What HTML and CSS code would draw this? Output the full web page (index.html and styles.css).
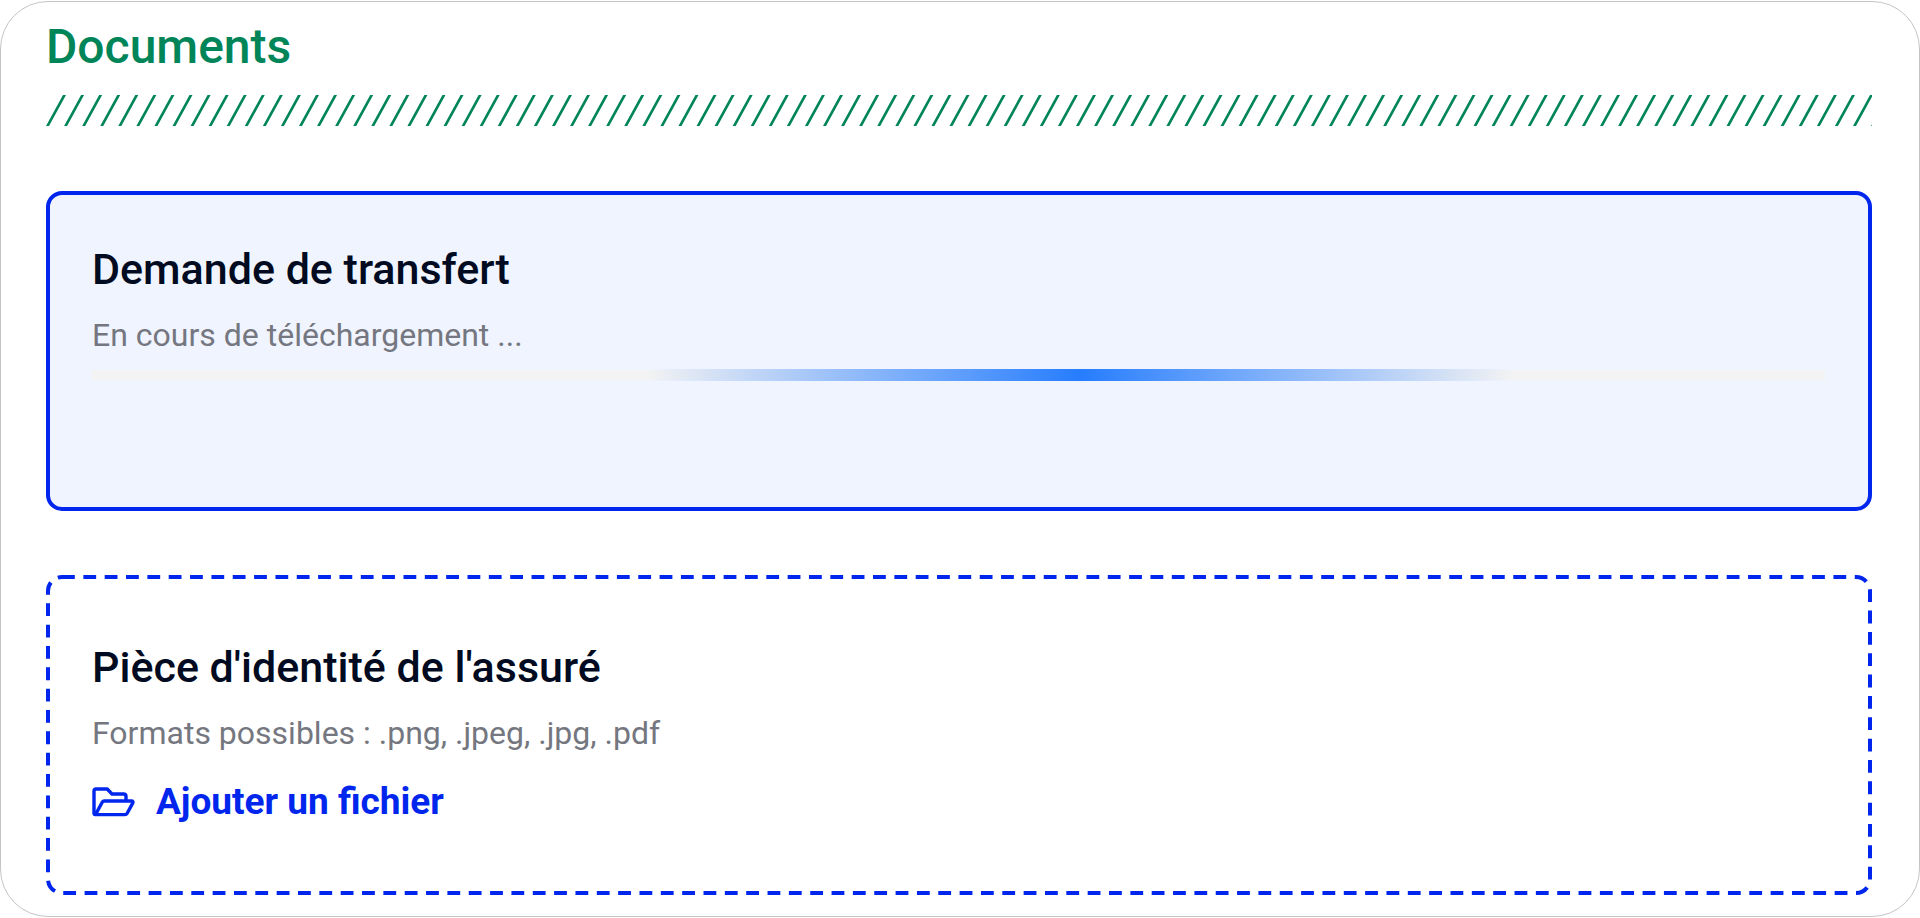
FILE: index.html
```html
<!DOCTYPE html>
<html lang="fr">
<head>
    <meta charset="UTF-8">
    <meta name="viewport" content="width=device-width, initial-scale=1.0">
    <title>Documents</title>
    <link rel="stylesheet" href="styles.css">
</head>
<body>
    <main class="panel">
        <h1 class="title">Documents</h1>
        <svg class="stripes" aria-hidden="true">
            <path d="M0 0H3614" pathLength="18000" transform="translate(8.5 15.5) skewX(-28.74)"/>
        </svg>

        <section class="card card-loading">
            <h2 class="card-title">Demande de transfert</h2>
            <p class="card-text">En cours de téléchargement ...</p>
            <div class="progress" role="progressbar" aria-label="Demande de transfert">
                <div class="progress-bar"></div>
            </div>
        </section>

        <section class="card card-empty">
            <svg class="dashes" aria-hidden="true">
                <rect class="dashes-line" x="2" y="2" rx="14" pathLength="1992"/>
            </svg>
            <h2 class="card-title">Pièce d'identité de l'assuré</h2>
            <p class="card-text">Formats possibles : .png, .jpeg, .jpg, .pdf</p>
            <button type="button" class="add-file">
                <svg class="icon" viewBox="0 0 44 30" aria-hidden="true">
                    <path d="M3.5 27.6Q2 27.6 2 26.1V4Q2 2 4 2H15.2L20 7H31.5Q34 7 34 9.5V14"/>
                    <path d="M3.5 27.6L10.2 15.3Q10.9 14 12.4 14H39.4Q41.8 14 40.7 16.1L35.2 26.2Q34.4 27.6 32.8 27.6Z"/>
                </svg>
                Ajouter un fichier
            </button>
        </section>
    </main>
</body>
</html>
```
FILE: styles.css
```css
* {
    box-sizing: border-box;
    margin: 0;
    padding: 0;
}

body {
    font-family: Roboto, Arial, sans-serif;
    background: #fff;
    color: #000a20;
    padding-top: 1px;
}

.panel {
    border: 1px solid #c4c4c4;
    border-radius: 48px;
    padding: 17px 47px 21px 45px;
}

.title {
    color: #008559;
    font-size: 48px;
    font-weight: 500;
    line-height: 56px;
    margin-bottom: 20px;
}

.stripes {
    display: block;
    width: 100%;
    height: 31px;
    stroke: #008559;
    stroke-width: 31px;
    stroke-dasharray: 15 75;
    margin-bottom: 65px;
}

.card {
    position: relative;
    min-height: 320px;
    border-radius: 16px;
    padding: 0 46px;
}

.card-loading {
    background: #f0f4ff;
    border: 4px solid #0026ee;
    padding: 50px 43px 50px 42px;
    margin-bottom: 64px;
}

.card-empty {
    padding-top: 68px;
}

/* dashed outline of the empty card */
.dashes {
    position: absolute;
    top: 0;
    left: 0;
    width: 100%;
    height: 100%;
    pointer-events: none;
}

.dashes-line {
    width: calc(100% - 4px);
    height: calc(100% - 4px);
    fill: none;
    stroke: #0026ee;
    stroke-width: 4px;
    stroke-dasharray: 6 4;
}

.card-title {
    font-size: 43px;
    font-weight: 500;
    line-height: 48px;
    margin-bottom: 22px;
}

.card-text {
    color: #757780;
    font-size: 32px;
    line-height: 40px;
}

.progress {
    position: relative;
    height: 10px;
    margin-top: 15px;
    background: #f3f3f3;
}

.progress-bar {
    position: absolute;
    top: -1px;
    left: 32%;
    width: 50%;
    height: 12px;
    background: linear-gradient(90deg, transparent, #267dff, transparent);
}

.add-file {
    display: flex;
    align-items: center;
    gap: 20px;
    margin-top: 29px;
    border: none;
    background: none;
    color: #0026ee;
    font-family: inherit;
    font-size: 37px;
    font-weight: 700;
    line-height: 40px;
    cursor: pointer;
}

.icon {
    width: 44px;
    height: 30px;
    fill: none;
    stroke: currentColor;
    stroke-width: 3.4;
    stroke-linejoin: round;
}
```
